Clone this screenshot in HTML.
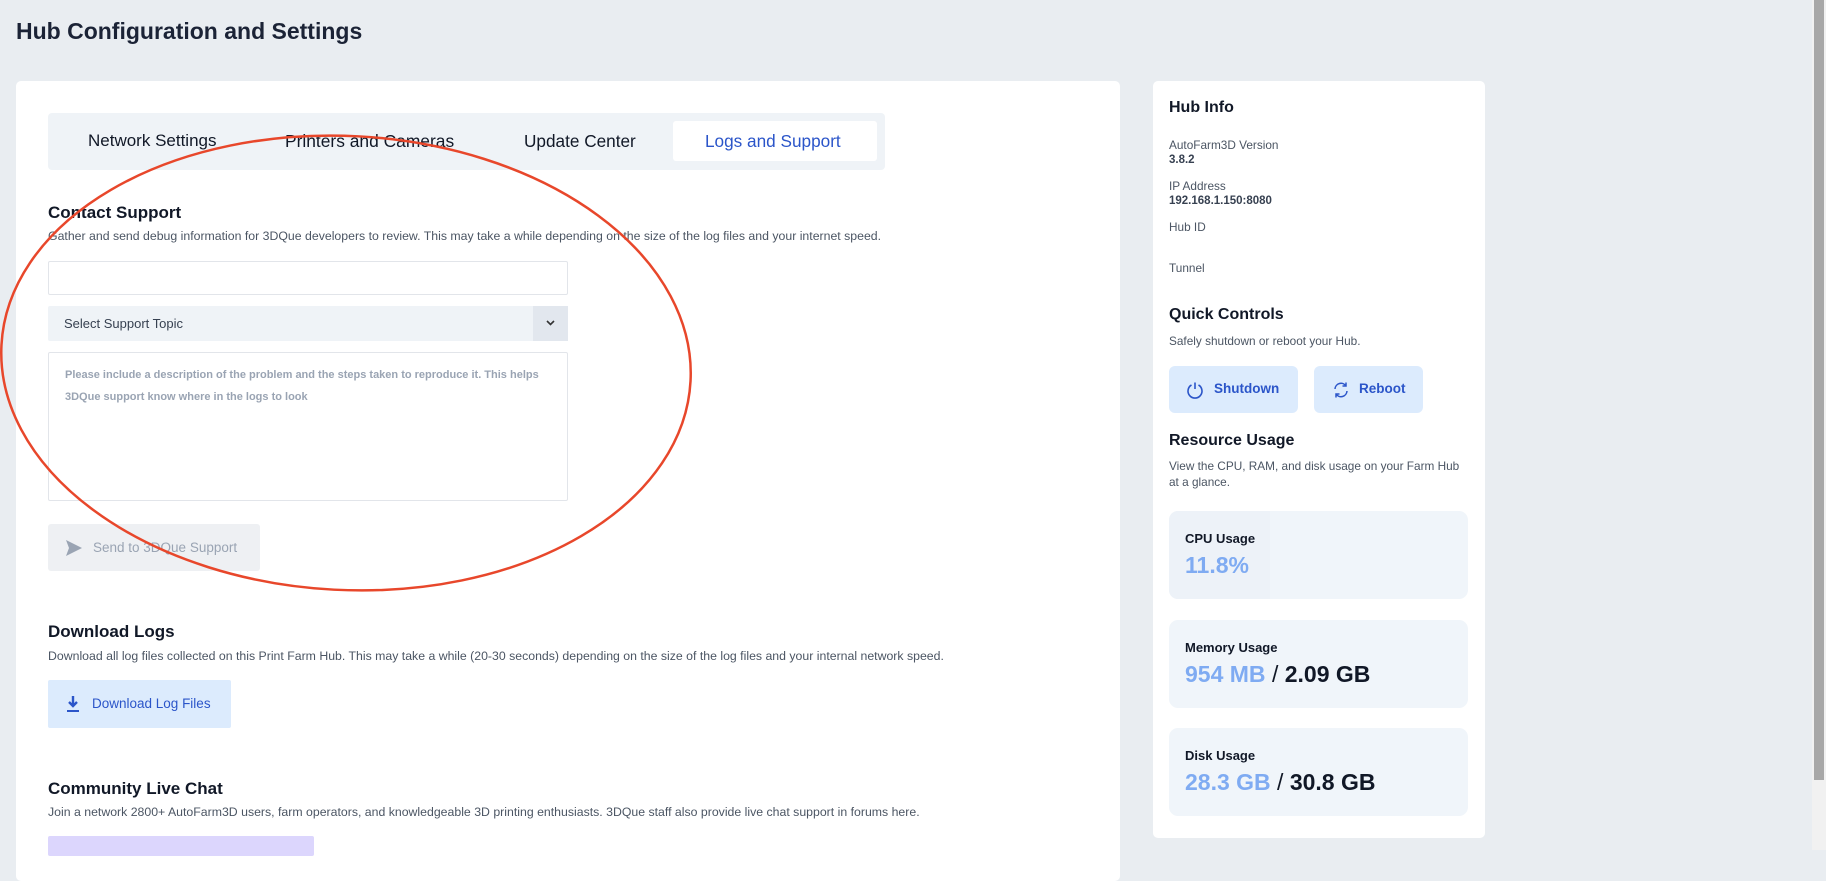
<!DOCTYPE html>
<html><head><meta charset="utf-8"><style>
*{margin:0;padding:0;box-sizing:border-box}
body{width:1826px;height:850px;overflow:hidden;background:#e9edf1;font-family:"Liberation Sans",sans-serif;color:#1b2336;position:relative}
.a{position:absolute;white-space:nowrap}
.sb{position:absolute;right:0;top:0;width:14px;height:850px;background:#f1f1f1}
.sb div{position:absolute;left:2px;right:2px;top:0;height:780px;background:#a8a8a8}
.card{position:absolute;background:#fff;border-radius:5px}
h2{font-size:17px;font-weight:bold;color:#111827}
.d{font-size:12.3px;color:#4b5563}
.sm{font-size:11.8px;color:#4b5563}
.box{position:absolute;left:1169px;width:299px;height:88px;background:#f0f5fa;border-radius:9px}
.lab{position:absolute;left:16px;top:20px;font-size:13px;font-weight:bold;color:#111827}
.val{position:absolute;left:16px;top:41px;font-size:23px;font-weight:bold;color:#111827}
.val span{color:#7fabf2}
</style></head><body>
<div class="a" style="left:16px;top:18px;font-size:23px;font-weight:bold;color:#1b2336">Hub Configuration and Settings</div>

<div class="card" style="left:16px;top:81px;width:1104px;height:800px"></div>
<div class="card" style="left:1153px;top:81px;width:332px;height:757px"></div>

<div style="position:absolute;left:48px;top:113px;width:837px;height:57px;background:#eff3f7;border-radius:4px"></div>
<div style="position:absolute;left:673px;top:121px;width:204px;height:40px;background:#fff;border-radius:3px"></div>
<div class="a" style="left:88px;top:131px;font-size:17px;color:#111827">Network Settings</div>
<div class="a" style="left:285px;top:131px;font-size:17.4px;color:#111827">Printers and Cameras</div>
<div class="a" style="left:524px;top:131px;font-size:17.2px;color:#111827">Update Center</div>
<div class="a" style="left:705px;top:131px;font-size:17.2px;color:#2b55c9">Logs and Support</div>

<h2 class="a" style="left:48px;top:203px">Contact Support</h2>
<div class="a d" style="left:48px;top:229px">Gather and send debug information for 3DQue developers to review. This may take a while depending on the size of the log files and your internet speed.</div>
<div style="position:absolute;left:48px;top:261px;width:520px;height:34px;border:1px solid #e2e5ea;border-radius:2px"></div>
<div style="position:absolute;left:48px;top:306px;width:520px;height:35px;background:#eff3f7;border-radius:2px"></div>
<div style="position:absolute;left:533px;top:306px;width:35px;height:35px;background:#e2e7ee"></div>
<svg class="a" style="left:545px;top:319px" width="11" height="8" viewBox="0 0 11 8"><path d="M2 2 L5.5 5.5 L9 2" stroke="#333" stroke-width="1.6" fill="none"/></svg>
<div class="a" style="left:64px;top:316px;font-size:13px;color:#374151">Select Support Topic</div>
<div style="position:absolute;left:48px;top:352px;width:520px;height:149px;border:1px solid #e2e5ea;border-radius:2px"></div>
<div class="a" style="left:65px;top:364px;font-size:11px;font-weight:bold;color:#9aa4b3;line-height:22px">Please include a description of the problem and the steps taken to reproduce it. This helps<br>3DQue support know where in the logs to look</div>

<div style="position:absolute;left:48px;top:524px;width:212px;height:47px;background:#eef0f3;border-radius:3px"></div>
<svg class="a" style="left:65px;top:539px" width="18" height="18" viewBox="0 0 18 18"><path d="M1 1 L17 9 L1 17 L4 9 Z" fill="#9aa4b3"/></svg>
<div class="a" style="left:93px;top:540px;font-size:13.5px;color:#9aa4b3">Send to 3DQue Support</div>

<h2 class="a" style="left:48px;top:622px">Download Logs</h2>
<div class="a d" style="left:48px;top:649px">Download all log files collected on this Print Farm Hub. This may take a while (20-30 seconds) depending on the size of the log files and your internal network speed.</div>
<div style="position:absolute;left:48px;top:680px;width:183px;height:48px;background:#dcebfd;border-radius:2px"></div>
<svg class="a" style="left:66px;top:695px" width="14" height="18" viewBox="0 0 14 18"><path d="M7 1 V11 M3 7 L7 11 L11 7" stroke="#2b55c9" stroke-width="2.4" fill="none"/><path d="M1 16 H13" stroke="#2b55c9" stroke-width="2"/></svg>
<div class="a" style="left:92px;top:696px;font-size:13.5px;color:#2b55c9">Download Log Files</div>

<h2 class="a" style="left:48px;top:779px">Community Live Chat</h2>
<div class="a d" style="left:48px;top:805px">Join a network 2800+ AutoFarm3D users, farm operators, and knowledgeable 3D printing enthusiasts. 3DQue staff also provide live chat support in forums here.</div>
<div style="position:absolute;left:48px;top:836px;width:266px;height:20px;background:#dcd6fd;border-radius:2px"></div>

<svg style="position:absolute;left:0;top:0" width="1826" height="850"><ellipse cx="346" cy="363" rx="345" ry="227" transform="rotate(3 346 363)" fill="none" stroke="#e8472b" stroke-width="2.5"/></svg>

<div class="a" style="left:1169px;top:99px;font-size:16px;font-weight:bold;color:#111827">Hub Info</div>
<div class="a sm" style="left:1169px;top:138px">AutoFarm3D Version</div>
<div class="a" style="left:1169px;top:154px;font-size:11.5px;font-weight:bold;color:#374151">3.8.2</div>
<div class="a sm" style="left:1169px;top:179px">IP Address</div>
<div class="a" style="left:1169px;top:195px;font-size:11.5px;font-weight:bold;color:#374151">192.168.1.150:8080</div>
<div class="a sm" style="left:1169px;top:220px">Hub ID</div>
<div class="a sm" style="left:1169px;top:261px">Tunnel</div>
<div class="a" style="left:1169px;top:306px;font-size:16px;font-weight:bold;color:#111827">Quick Controls</div>
<div class="a sm" style="left:1169px;top:334px">Safely shutdown or reboot your Hub.</div>
<div style="position:absolute;left:1169px;top:366px;width:129px;height:47px;background:#dcebfd;border-radius:6px"></div>
<svg class="a" style="left:1186px;top:381px" width="18" height="18" viewBox="0 0 18 18"><path d="M5.5 4 A7 7 0 1 0 12.5 4" stroke="#2b55c9" stroke-width="1.6" fill="none"/><path d="M9 1.5 V8" stroke="#2b55c9" stroke-width="1.6"/></svg>
<div class="a" style="left:1214px;top:381px;font-size:13.5px;font-weight:bold;color:#2b55c9">Shutdown</div>
<div style="position:absolute;left:1314px;top:366px;width:109px;height:47px;background:#dcebfd;border-radius:6px"></div>
<svg class="a" style="left:1332px;top:381px" width="18" height="18" viewBox="0 0 18 18"><path d="M3 8 A6 6 0 0 1 14 5 M15 10 A6 6 0 0 1 4 13" stroke="#2b55c9" stroke-width="1.5" fill="none"/><path d="M14 1.5 V5 H10.5 M4 16.5 V13 H7.5" stroke="#2b55c9" stroke-width="1.5" fill="none"/></svg>
<div class="a" style="left:1359px;top:381px;font-size:13.5px;font-weight:bold;color:#2b55c9">Reboot</div>
<div class="a" style="left:1169px;top:432px;font-size:16px;font-weight:bold;color:#111827">Resource Usage</div>
<div class="a sm" style="left:1169px;top:458px;line-height:16px">View the CPU, RAM, and disk usage on your Farm Hub<br>at a glance.</div>

<div class="box" style="top:511px"><div style="position:absolute;left:0;top:0;width:101px;height:88px;background:#edf2f8;border-radius:9px 0 0 9px"></div><div class="lab">CPU Usage</div><div class="val"><span>11.8%</span></div></div>
<div class="box" style="top:620px"><div class="lab">Memory Usage</div><div class="val"><span>954 MB</span> <span style="color:#111827;font-weight:normal">/</span> 2.09 GB</div></div>
<div class="box" style="top:728px"><div class="lab">Disk Usage</div><div class="val"><span>28.3 GB</span> <span style="color:#111827;font-weight:normal">/</span> 30.8 GB</div></div>

<div class="sb"><div></div></div>
</body></html>
